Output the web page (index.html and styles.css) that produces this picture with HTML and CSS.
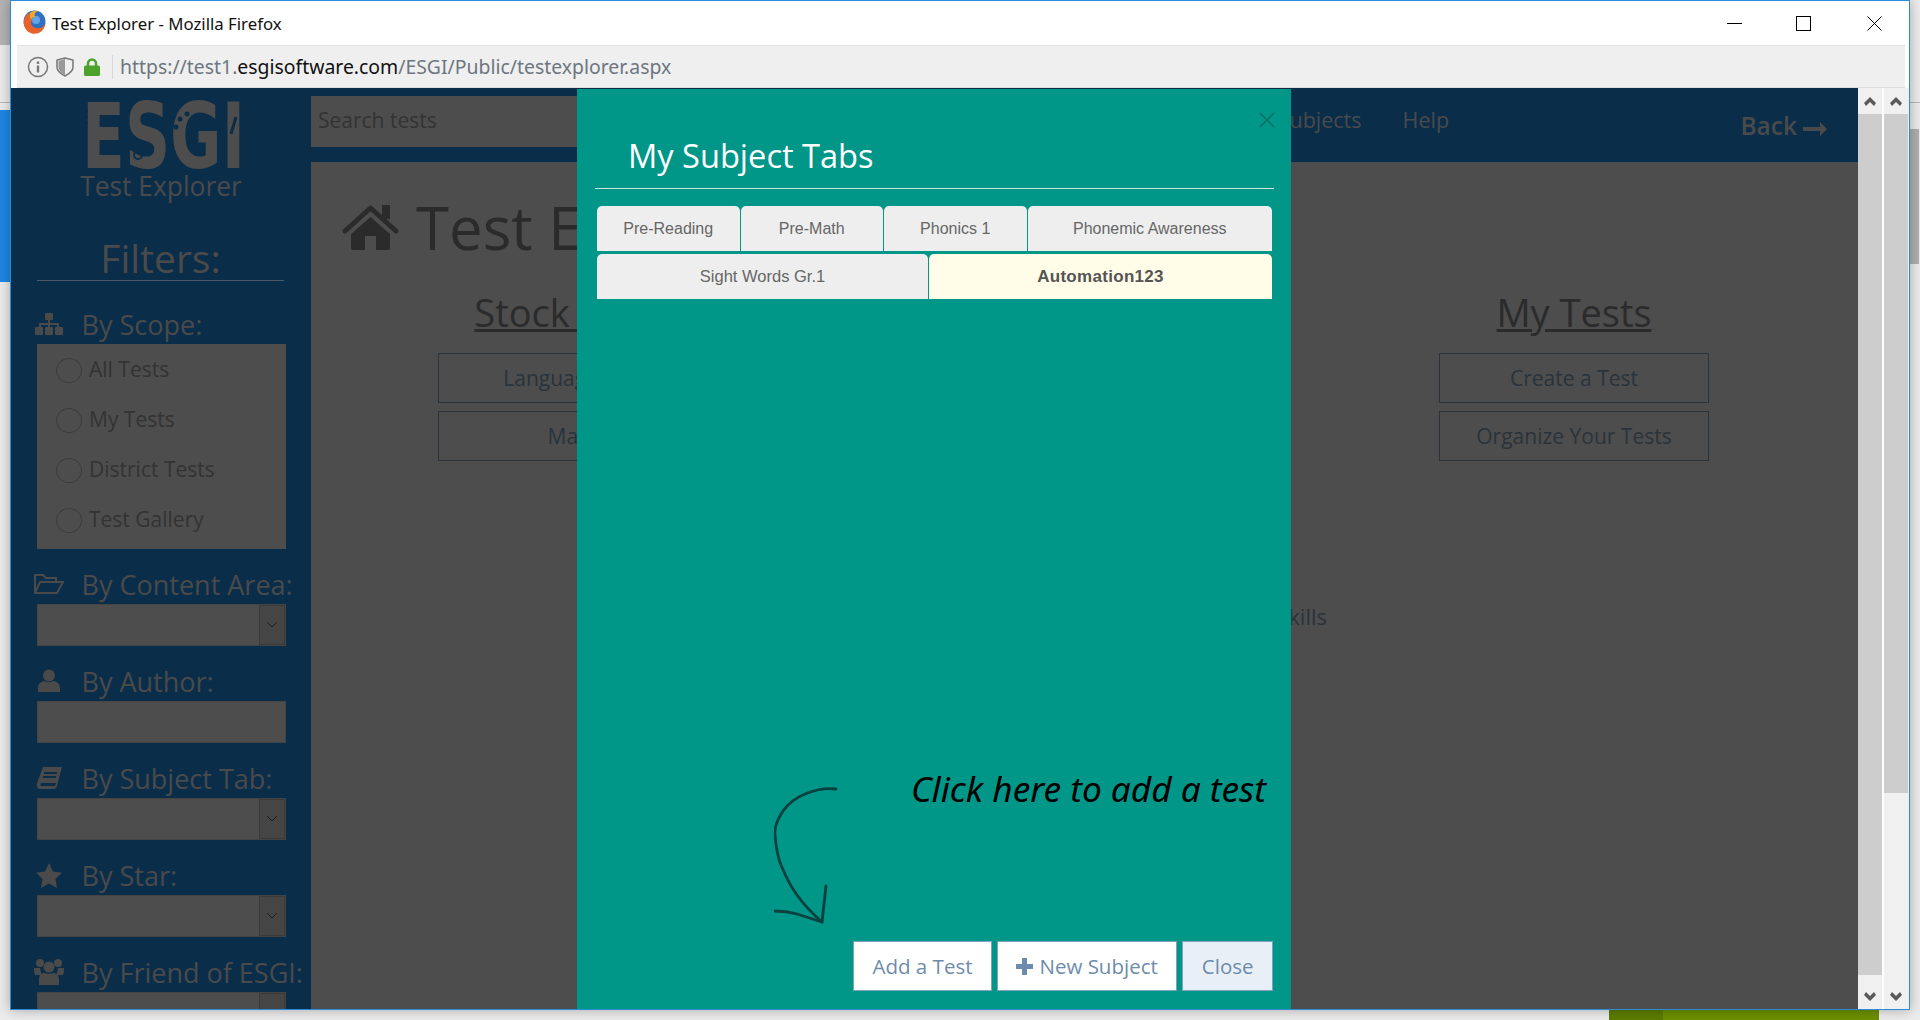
FILE: index.html
```html
<!DOCTYPE html>
<html lang="en">

<head>
    <meta charset="UTF-8">
    <title>Test Explorer - Mozilla Firefox</title>
    <link rel="stylesheet" href="styles.css">
</head>

<body>
    <div class="backdrop-gray"></div>
    <div class="backdrop-line"></div>
    <div class="backdrop-blue"></div>
    <div class="backdrop-thumb"></div>
    <div class="backdrop-green"><span class="backdrop-green-dark"></span></div>

    <div class="window">
        <div class="titlebar">
            <svg class="ff-logo" width="24" height="24" viewBox="0 0 24 24">
                <circle cx="12.500" cy="11.500" r="11" fill="#2f6fc4" />
                <circle cx="14" cy="10" r="4" fill="#63a4e6" />
                <path d="M3 7C0 14 3 22 10 23.500 17 25 23 20 23.500 13 22 17 18 19 14 18 9 17 8 13 10 10 8 9 7 7 8 3 5 4 4 5 3 7z" fill="#e8622a" />
                <path d="M8 3c2-2 5-2.500 8-2-3 1-4 3-3 6-2 0-4 1-3 3-2-1-3-4-2-7z" fill="#f6a623" />
            </svg>
            <span class="window-title">Test Explorer - Mozilla Firefox</span>
            <div class="window-controls">
                <svg width="15" height="15" viewBox="0 0 15 15"><path d="M0 7.500h15" stroke="#000" /></svg>
                <svg width="15" height="15" viewBox="0 0 15 15"><rect x=".5" y=".5" width="14" height="14" fill="none" stroke="#000" /></svg>
                <svg class="control-close" width="15" height="15" viewBox="0 0 15 15"><path d="M.5.5l14 14M14.500.5l-14 14" stroke="#000" /></svg>
            </div>
        </div>

        <div class="addressbar">
            <svg width="22" height="22" viewBox="0 0 22 22">
                <circle cx="11" cy="11" r="9.500" fill="none" stroke="#777" stroke-width="1.500" />
                <rect x="9.800" y="9.500" width="2.400" height="7" fill="#777" />
                <rect x="9.800" y="5.500" width="2.400" height="2.400" fill="#777" />
            </svg>
            <svg class="addr-shield" width="18" height="20" viewBox="0 0 18 20">
                <path d="M9 1l8 2v7c0 4-4 7-8 9-4-2-8-5-8-9V3z" fill="none" stroke="#777" stroke-width="1.500" />
                <path d="M9 2v16c-4-2-6.500-5-6.500-8V4z" fill="#999" />
            </svg>
            <svg width="16" height="18" viewBox="0 0 16 18">
                <path d="M4 8V5.500a4 4 0 0 1 8 0V8" fill="none" stroke="#4ca22a" stroke-width="2.500" />
                <rect y="7.500" width="16" height="10.500" rx="1.500" fill="#4ca22a" />
            </svg>
            <span class="addr-sep"></span>
            <span class="url">https://test1.<b>esgisoftware.com</b>/ESGI/Public/testexplorer.aspx</span>
        </div>

        <div class="viewport">
            <div class="app">
                <aside class="sidebar">
                    <svg class="logo" width="170" height="70" viewBox="0 0 170 70">
                        <text class="logo-text" x="0" y="68" textLength="163" lengthAdjust="spacingAndGlyphs">ESGI</text>
                        <g fill="#0a2d4a">
                            <circle cx="105" cy="14" r="2.500" />
                            <circle cx="98" cy="19" r="2.500" />
                            <circle cx="94" cy="27" r="2.500" />
                            <rect x="0" y="10" width="6" height="2" />
                            <rect x="0" y="16" width="6" height="2" />
                            <rect x="0" y="22" width="6" height="2" />
                        </g>
                        <g fill="none" stroke="#0a2d4a" stroke-width="2">
                            <circle cx="66" cy="18" r="4.500" />
                            <circle cx="56" cy="55" r="4" />
                            <path d="M154 17l-5 17" stroke-width="3" />
                        </g>
                    </svg>
                    <div class="logo-sub">Test Explorer</div>
                    <div class="filters-title">Filters:</div>

                    <div class="filter-label">
                        <svg class="filter-icon" width="28" height="22" viewBox="0 0 28 22" fill="#4a4a4a">
                            <rect x="10" y="0" width="8" height="7" rx="1" />
                            <path d="M13 7h2v3h9v4h-2v-2h-7v2h-2v-2H6v2H4v-4h9z" />
                            <rect x="0" y="14" width="8" height="8" rx="1" />
                            <rect x="10" y="14" width="8" height="8" rx="1" />
                            <rect x="20" y="14" width="8" height="8" rx="1" />
                        </svg>
                        By Scope:
                    </div>
                    <div class="scope-box">
                        <div class="scope-row"><span class="radio"></span>All Tests</div>
                        <div class="scope-row"><span class="radio"></span>My Tests</div>
                        <div class="scope-row"><span class="radio"></span>District Tests</div>
                        <div class="scope-row"><span class="radio"></span>Test Gallery</div>
                    </div>

                    <div class="filter-label">
                        <svg class="filter-icon" width="30" height="22" viewBox="0 0 30 22" fill="none" stroke="#4a4a4a" stroke-width="2">
                            <path d="M1 20V2h8l3 3h10v4M1 20l5-11h23l-6 11z" />
                        </svg>
                        By Content Area:
                    </div>
                    <div class="fake-select"><span class="select-btn"><svg width="10" height="6" viewBox="0 0 10 6"><path d="M0 0l5 5 5-5" fill="none" stroke="#222" /></svg></span></div>

                    <div class="filter-label">
                        <svg class="filter-icon" width="24" height="24" viewBox="0 0 24 24" fill="#4a4a4a">
                            <circle cx="12" cy="6.500" r="6" />
                            <path d="M1 23v-4c0-5 4-7 7-7 2 1.500 6 1.500 8 0 3 0 7 2 7 7v4z" />
                        </svg>
                        By Author:
                    </div>
                    <div class="fake-input"></div>

                    <div class="filter-label">
                        <svg class="filter-icon" width="26" height="24" viewBox="0 0 26 24" fill="#4a4a4a">
                            <path d="M7 1h19l-5 19c-1 3-3 3-5 3H5c-3 0-5-2-4-6zm1 5v2h13V6zm-1 4v2h13v-2zM5 17c-1 1-1 3 1 3h13l1-3z" fill-rule="evenodd" />
                        </svg>
                        By Subject Tab:
                    </div>
                    <div class="fake-select"><span class="select-btn"><svg width="10" height="6" viewBox="0 0 10 6"><path d="M0 0l5 5 5-5" fill="none" stroke="#222" /></svg></span></div>

                    <div class="filter-label">
                        <svg class="filter-icon" width="26" height="25" viewBox="0 0 26 25" fill="#4a4a4a">
                            <path d="M13 0l4 8.500 9 1.200-6.500 6.300L21 25l-8-4.500L5 25l1.500-9L0 9.700 9 8.500z" />
                        </svg>
                        By Star:
                    </div>
                    <div class="fake-select"><span class="select-btn"><svg width="10" height="6" viewBox="0 0 10 6"><path d="M0 0l5 5 5-5" fill="none" stroke="#222" /></svg></span></div>

                    <div class="filter-label">
                        <svg class="filter-icon" width="30" height="26" viewBox="0 0 30 26" fill="#4a4a4a">
                            <circle cx="6" cy="4" r="4" />
                            <circle cx="24" cy="4" r="4" />
                            <circle cx="15" cy="8" r="5.500" />
                            <path d="M0 9h6l1 5 1 2H1c-1-2-1-5-1-7zM30 9h-6l-1 5-1 2h7c1-2 1-5 1-7z" />
                            <path d="M5 26v-6c0-4 3-6 5-6 3 1 7 1 10 0 2 0 5 2 5 6v6z" />
                        </svg>
                        By Friend of ESGI:
                    </div>
                    <div class="fake-select"><span class="select-btn"></span></div>
                </aside>

                <div class="page">
                    <div class="topnav">
                        <div class="search">Search tests</div>
                        <nav class="topnav-links">
                            <span class="topnav-link">My Subjects</span>
                            <span class="topnav-link">Help</span>
                        </nav>
                        <div class="back">Back
                            <svg width="24" height="14" viewBox="0 0 24 14"><path d="M0 5h17V0l7 7-7 7V9H0z" fill="#4a4a4a" /></svg>
                        </div>
                    </div>

                    <main class="main">
                        <h1 class="page-title">
                            <svg width="57" height="45" viewBox="0 0 57 45" fill="#2b2b2b">
                                <path d="M3 26L28.500 3 54 26" fill="none" stroke="#2b2b2b" stroke-width="5" stroke-linecap="round" stroke-linejoin="round" />
                                <rect x="40" y="0" width="8" height="14" />
                                <path d="M9 29L28.500 12 48 29v14q0 2-2 2H34V31H23v14H11q-2 0-2-2z" />
                            </svg>
                            Test Explorer
                        </h1>
                        <div class="columns">
                            <section class="column">
                                <h2 class="column-title">Stock Tests</h2>
                                <div class="outline-btn">Language Arts</div>
                                <div class="outline-btn">Math</div>
                            </section>
                            <section class="column">
                                <h2 class="column-title">My Tests</h2>
                                <div class="outline-btn">Create a Test</div>
                                <div class="outline-btn">Organize Your Tests</div>
                            </section>
                        </div>
                        <p class="blurb">Skills</p>
                    </main>
                </div>
            </div>

            <div class="scrollbar">
                <span class="scroll-arrow"><svg width="12" height="9" viewBox="0 0 12 9"><path d="M6 0l6 6-2 3-4-4-4 4-2-3z" fill="#5a5a5a" /></svg></span>
                <span class="scroll-track"></span>
                <span class="scroll-arrow"><svg width="12" height="9" viewBox="0 0 12 9"><path d="M6 9L0 3l2-3 4 4 4-4 2 3z" fill="#5a5a5a" /></svg></span>
            </div>
            <div class="scrollbar scrollbar-outer">
                <span class="scroll-arrow"><svg width="12" height="9" viewBox="0 0 12 9"><path d="M6 0l6 6-2 3-4-4-4 4-2-3z" fill="#5a5a5a" /></svg></span>
                <span class="scroll-track"></span>
                <span class="scroll-arrow"><svg width="12" height="9" viewBox="0 0 12 9"><path d="M6 9L0 3l2-3 4 4 4-4 2 3z" fill="#5a5a5a" /></svg></span>
            </div>

            <div class="modal">
                <span class="modal-close">
                    <svg width="16" height="16" viewBox="0 0 16 16"><path d="M1 1l14 14M15 1L1 15" stroke="#0b6f68" stroke-width="1.500" /></svg>
                </span>
                <div class="modal-title">My Subject Tabs</div>
                <div class="tab-row">
                    <div class="tab tab-a">Pre-Reading</div>
                    <div class="tab tab-a">Pre-Math</div>
                    <div class="tab tab-a">Phonics 1</div>
                    <div class="tab tab-b">Phonemic Awareness</div>
                </div>
                <div class="tab-row">
                    <div class="tab tab-half">Sight Words Gr.1</div>
                    <div class="tab tab-b tab-active">Automation123</div>
                </div>
                <div class="modal-spacer">
                    <div class="hint">Click here to add a test</div>
                    <svg class="hint-arrow" width="66" height="140" viewBox="0 0 66 140" fill="none" stroke="#0a403f" stroke-linecap="round" stroke-linejoin="round">
                        <path d="M62 2C44 0 20 8 9 24 3 33 0 40 1 48 2 60 3 68 7 78 12 90 17 100 23 108 30 118 40 128 48 135" stroke-width="2.800" />
                        <path d="M1 124c8 0 15 1 22 3l25 8 4-36" stroke-width="2.800" />
                    </svg>
                </div>
                <div class="modal-footer">
                    <div class="modal-btn">Add a Test</div>
                    <div class="modal-btn">
                        <svg width="17" height="17" viewBox="0 0 17 17"><path d="M6 0h5v6h6v5h-6v6H6v-6H0V6h6z" fill="#6d8cab" /></svg>
                        New Subject
                    </div>
                    <div class="modal-btn modal-btn-close">Close</div>
                </div>
            </div>
        </div>
    </div>
</body>

</html>
```

FILE: styles.css
```css
* {
    box-sizing: border-box;
}

body {
    margin: 0;
    width: 1920px;
    height: 1020px;
    position: relative;
    overflow: hidden;
    background: #ececec;
    font-family: 'Open Sans', sans-serif;
}

/* what shows around the popup window */
.backdrop-gray {
    position: absolute;
    left: 0;
    top: 0;
    width: 10px;
    height: 45px;
    background: #b4b4b4;
}

.backdrop-line {
    position: absolute;
    left: 0;
    top: 102px;
    width: 100%;
    height: 1px;
    background: #b8b8b8;
}

.backdrop-blue {
    position: absolute;
    left: 0;
    top: 110px;
    width: 10px;
    height: 172px;
    background: #1e88e5;
}

.backdrop-thumb {
    position: absolute;
    left: 1910px;
    top: 129px;
    width: 9px;
    height: 135px;
    background: #b0b0b0;
}

.backdrop-green {
    position: absolute;
    left: 1609px;
    top: 1000px;
    width: 270px;
    height: 20px;
    background: #6e9000;
}

.backdrop-green-dark {
    display: block;
    width: 54px;
    height: 100%;
    background: #5c7d00;
}

.window {
    position: absolute;
    left: 10px;
    top: 0;
    width: 1900px;
    height: 1010px;
    display: flex;
    flex-direction: column;
    background: #fff;
    border: 1px solid #2b8bd8;
    box-shadow: 0 0 12px rgba(0, 0, 0, 0.3);
}

.titlebar {
    height: 44px;
    display: flex;
    align-items: center;
    padding-left: 11px;
    flex-shrink: 0;
}

.ff-logo {
    margin-right: 6px;
    margin-top: -2px;
}

.window-title {
    font-family: 'Noto Sans', sans-serif;
    font-size: 16.800px;
    color: #111;
}

.window-controls {
    margin-left: auto;
    display: flex;
    gap: 54px;
    padding-right: 27px;
}

.control-close {
    margin-left: 2px;
}

.addressbar {
    height: 43px;
    margin-left: 6px;
    margin-right: 4px;
    display: flex;
    align-items: center;
    flex-shrink: 0;
    padding-left: 10px;
    background: #efefef;
    border-top: 1px solid #e2e2e2;
    border-bottom: 1px solid #ddd;
}

.addr-shield {
    margin: 0 10px 0 7px;
}

.addr-sep {
    width: 1px;
    height: 24px;
    margin: 0 7px 0 12px;
    background: #d8d8d8;
}

.url {
    font-family: 'Noto Sans', sans-serif;
    font-size: 19.400px;
    color: #6e7680;
}

.url b {
    font-weight: normal;
    color: #111;
}

.viewport {
    position: relative;
    flex: 1;
    display: flex;
    min-height: 0;
    overflow: hidden;
}

.app {
    flex: 1;
    display: flex;
    min-width: 0;
}

.sidebar {
    width: 300px;
    flex-shrink: 0;
    padding: 12px 0 0 26px;
    background: #0a2d4a;
    color: #4a4a4a;
    overflow: hidden;
}

.logo {
    display: block;
    margin-left: 45px;
    overflow: visible;
}

.logo-text {
    font-family: 'DejaVu Sans', sans-serif;
    font-weight: bold;
    font-size: 90px;
    fill: #4d4d4d;
}

.logo-sub {
    width: 248px;
    margin-top: -1px;
    font-size: 26.400px;
    line-height: 34px;
    text-align: center;
    color: #4a4a4a;
}

.filters-title {
    width: 247px;
    height: 46px;
    margin-top: 32px;
    border-bottom: 1px solid #4a5a68;
    font-size: 39px;
    line-height: 46px;
    text-align: center;
    color: #4a4a4a;
}

.filter-label {
    display: flex;
    align-items: center;
    height: 38px;
    padding-bottom: 2px;
    margin: 17px 0 0 -3px;
    white-space: nowrap;
    font-size: 27px;
}

.filters-title + .filter-label {
    margin-top: 25px;
}

.filter-icon {
    width: 30px;
    margin-right: 17.500px;
    flex-shrink: 0;
}

.scope-box {
    width: 249px;
    height: 205px;
    padding-top: 1px;
    background: #4d4d4d;
}

.scope-row {
    display: flex;
    align-items: center;
    height: 50px;
    padding: 0 0 2px 19px;
    gap: 7px;
    font-size: 21px;
    color: #333;
}

.radio {
    width: 26px;
    height: 25px;
    margin-top: 2px;
    border: 1px solid #3c3c3c;
    border-radius: 50%;
}

.fake-select,
.fake-input {
    width: 249px;
    height: 42px;
    display: flex;
    justify-content: flex-end;
    background: #4d4d4d;
    border: 1px solid #444;
}

.select-btn {
    width: 26px;
    display: flex;
    align-items: center;
    justify-content: center;
    background: #454545;
    border: 1px solid #3a3a3a;
}

.page {
    flex: 1;
    min-width: 0;
    display: flex;
    flex-direction: column;
    background: #4d4d4d;
}

.topnav {
    height: 74px;
    flex-shrink: 0;
    display: flex;
    background: #0a2d4a;
    color: #4a4a4a;
}

.search {
    width: 600px;
    height: 51px;
    margin-top: 8px;
    padding-left: 7px;
    background: #4d4d4d;
    font-size: 21px;
    line-height: 49px;
    color: #333;
}

.topnav-links {
    display: flex;
    gap: 41px;
    margin-left: 331px;
    padding-top: 17px;
    font-size: 21.500px;
    white-space: nowrap;
}

.back {
    margin-left: auto;
    margin-right: 31px;
    padding-top: 21px;
    display: flex;
    align-items: flex-start;
    gap: 6px;
    font-size: 24.500px;
    font-weight: 600;
}

.back svg {
    margin-top: 13px;
}

.main {
    flex: 1;
    padding: 0 30px;
    color: #2b2b2b;
}

.page-title {
    display: flex;
    align-items: center;
    gap: 17px;
    margin: 37px 0 0 1px;
    font-size: 60px;
    font-weight: 400;
    line-height: 56px;
}

.columns {
    display: flex;
    justify-content: space-between;
    padding: 0 119px 0 97px;
    margin-top: 35px;
}

.column {
    width: 270px;
    text-align: center;
}

.column-title {
    margin: 0 0 18px;
    font-size: 38px;
    font-weight: 400;
    line-height: 45px;
    text-decoration: underline;
    white-space: nowrap;
}

.outline-btn {
    height: 50px;
    margin-bottom: 8px;
    border: 1px solid #2a333b;
    font-size: 21px;
    line-height: 48px;
    color: #2a333b;
}

.blurb {
    margin: 132px 501px 0 0;
    font-size: 22px;
    text-align: right;
    color: #2a333b;
}

.scrollbar {
    width: 26px;
    flex-shrink: 0;
    display: flex;
    flex-direction: column;
    background: #f0f0f0;
    border-right: 2px solid #fff;
}

.scrollbar-outer {
    width: 25px;
    border-right: 1px solid #f0f0f0;
}

.scroll-arrow {
    height: 26px;
    flex-shrink: 0;
    display: flex;
    align-items: center;
    justify-content: center;
}

.scroll-arrow:last-child {
    margin-top: auto;
}

.scroll-track {
    height: 861px;
    background: #cdcdcd;
}

.scrollbar-outer .scroll-track {
    height: 679px;
}

/* modal sits over the dimmed page */
.modal {
    position: absolute;
    left: 566px;
    top: 1px;
    width: 714px;
    bottom: 0;
    display: flex;
    flex-direction: column;
    padding: 0 19px 0 20px;
    background: #009688;
}

.modal-close {
    position: absolute;
    top: 23px;
    right: 16px;
}

.modal-close svg {
    display: block;
}

.modal-title {
    height: 100px;
    margin: 0 -2px;
    padding: 45px 0 0 33px;
    border-bottom: 1px solid #cfe3df;
    font-size: 32.600px;
    line-height: 44px;
    color: #fff;
}

.tab-row {
    display: flex;
    gap: 1px;
    margin-top: 3px;
}

.modal-title + .tab-row {
    margin-top: 17px;
}

.tab {
    height: 45px;
    background: #eee;
    border-radius: 5px 5px 0 0;
    font-family: 'Liberation Sans', sans-serif;
    font-size: 16px;
    line-height: 45px;
    text-align: center;
    color: #666;
}

.tab-a {
    width: 142.500px;
}

.tab-b {
    flex: 1;
}

.tab-half {
    width: 331px;
    font-size: 16.500px;
}

.tab-active {
    background: #fffde7;
    font-size: 17px;
    font-weight: bold;
    letter-spacing: 0.3px;
    color: #555;
}

.modal-spacer {
    position: relative;
    flex: 1;
}

.hint {
    position: absolute;
    right: 6px;
    top: 465px;
    font-family: 'Noto Sans', sans-serif;
    font-style: italic;
    font-size: 35.200px;
    color: #000;
    white-space: nowrap;
}

.hint-arrow {
    position: absolute;
    left: 177px;
    top: 488px;
}

.modal-footer {
    display: flex;
    justify-content: flex-end;
    gap: 5px;
    height: 68px;
    margin-right: -1px;
    flex-shrink: 0;
}

.modal-btn {
    height: 50px;
    padding: 0 18.500px;
    display: flex;
    align-items: center;
    gap: 6px;
    background: #fff;
    border: 1px solid #7fa0c0;
    font-size: 20.500px;
    color: #6d8cab;
}

.modal-btn-close {
    background: #e9eff7;
}
```
